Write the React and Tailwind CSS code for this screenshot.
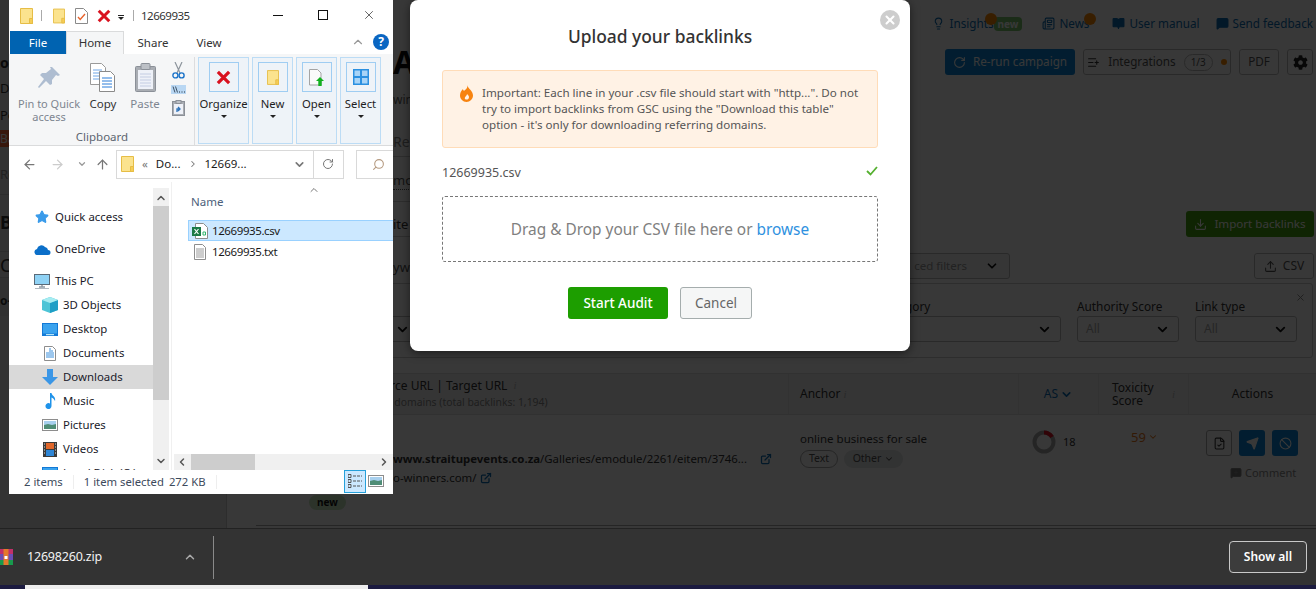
import { Star, ChevronDown, ChevronUp, ChevronRight, ChevronLeft, ArrowLeft, ArrowRight, ArrowUp, RotateCw, Search, X, Lightbulb, Newspaper, BookOpen, MessageSquare, ListPlus, Upload, Download, ExternalLink, FileCheck, Send, Ban, MessageSquarePlus } from "lucide-react";
import { FaCog } from "react-icons/fa";

const uiFont = "font-['Noto_Sans','Open_Sans',sans-serif]";

function FolderIcon({ w = 13, h = 16 }) {
  return (
    <svg width={w} height={h} viewBox="0 0 13 16" className="shrink-0">
      <path d="M.5.5h12v15H.5z" fill="#fbe38e" stroke="#e6bd45" />
      <path d="M9.5 10.5h3v5h-3z" fill="#f6cd55" stroke="#e6bd45" />
    </svg>
  );
}

function RedX({ size = 16 }) {
  return (
    <svg width={size} height={size} viewBox="0 0 16 16" className="shrink-0">
      <path d="M2 2l12 12M14 2L2 14" stroke="#d9121f" strokeWidth="3.4" />
    </svg>
  );
}

function CheckDoc() {
  return (
    <svg width="13" height="16" viewBox="0 0 13 16" className="shrink-0">
      <path d="M.5.5h8l4 4v11H.5z" fill="#fff" stroke="#8a8a8a" />
      <path d="M3 9l2.2 2.4L10 6" fill="none" stroke="#e8622a" strokeWidth="1.4" />
    </svg>
  );
}

function PinIcon() {
  return (
    <svg width="24" height="24" viewBox="0 0 24 24">
      <path d="M15 1l8 8-2 1-2-1-4 5 0 4-2 1-4-4-7 7-1-1 6-8-4-4 2-2 4 0 5-4-1-2z" fill="#aebdd1" />
    </svg>
  );
}

function CopyIcon() {
  return (
    <svg width="26" height="29" viewBox="0 0 26 29">
      <path d="M.5.5h11l4 4v17H.5z" fill="#fff" stroke="#9a9a9a" />
      <path d="M3 7h9M3 10h9M3 13h9M3 16h9" stroke="#6ea6e6" />
      <path d="M9.5 8.5h11l4 4v16h-15z" fill="#fff" stroke="#8a8a8a" />
      <path d="M12 15h10M12 18h10M12 21h10M12 24h10" stroke="#2b7cd8" />
    </svg>
  );
}

function PasteIcon() {
  return (
    <svg width="21" height="29" viewBox="0 0 21 29">
      <rect x=".5" y="3.5" width="20" height="25" rx="1" fill="#a9adb3" stroke="#8b9098" />
      <rect x="3" y="7" width="15" height="19" fill="#eef1f8" />
      <path d="M5 11h11M5 14h11M5 17h11M5 20h11M5 23h11" stroke="#c3cce2" />
      <rect x="6" y="0.5" width="9" height="6" rx="1" fill="#bcc0c6" stroke="#8b9098" />
    </svg>
  );
}

function ScissorsIcon() {
  return (
    <svg width="13" height="17" viewBox="0 0 13 17">
      <path d="M3 0l5 11M10 0L5 11" stroke="#8d949c" strokeWidth="1.2" fill="none" />
      <circle cx="3.4" cy="13.4" r="2.5" fill="none" stroke="#1d74c9" strokeWidth="1.4" />
      <circle cx="9.6" cy="13.4" r="2.5" fill="none" stroke="#1d74c9" strokeWidth="1.4" />
    </svg>
  );
}

function PathIcon() {
  return (
    <svg width="15" height="9" viewBox="0 0 15 9">
      <rect width="15" height="9" fill="#b9d7f3" />
      <path d="M2 1.5l2 6M4.500 1.500l2 6" stroke="#20303f" strokeWidth=".8" />
      <path d="M8 7h1M10.500 7h1M13 7h1" stroke="#20303f" />
    </svg>
  );
}

function ShortcutIcon() {
  return (
    <svg width="13" height="16" viewBox="0 0 13 16">
      <rect x=".5" y="1.500" width="12" height="14" fill="#a9adb3" stroke="#8b9098" />
      <rect x="2" y="4" width="9" height="10" fill="#eef1f8" />
      <rect x="4" y=".5" width="5" height="3" fill="#bcc0c6" stroke="#8b9098" />
      <path d="M5 12V9h3M6 7l2 2-2 2" fill="none" stroke="#2d72b8" strokeWidth="1.300" />
    </svg>
  );
}

function OpenIcon() {
  return (
    <svg width="15" height="17" viewBox="0 0 15 17">
      <path d="M.5.500h8l3.500 3.500v12H.5z" fill="#fafafa" stroke="#a4a4a4" />
      <path d="M11 8l4 4h-2.300v5h-3.400v-5H7z" fill="#12b01e" />
    </svg>
  );
}

function SelectIcon() {
  return (
    <svg width="16" height="16" viewBox="0 0 16 16">
      <path d="M0 0h16v16H0z" fill="#2b90e0" />
      <path d="M1.500 1.500h5.500v5.500H1.500zM9 1.500h5.500v5.500H9zM1.500 9h5.500v5.500H1.500zM9 9h5.500v5.500H9z" fill="#a8d4f7" />
    </svg>
  );
}

const ribbonGroups = [
  { label: "Organize", width: "w-[51px]", icon: <RedX size={15} /> },
  { label: "New", width: "w-[41px]", icon: <FolderIcon w={12} h={15} /> },
  { label: "Open", width: "w-[41px]", icon: <OpenIcon /> },
  { label: "Select", width: "w-[41px]", icon: <SelectIcon /> },
];

function RibbonGroup({ label, width, icon }) {
  return (
    <div className={`${width} h-[87px] flex flex-col items-center bg-[#eef3f8] border border-[#bcdcf5]`}>
      <div className="mt-[4px] w-[30px] h-[30px] flex items-center justify-center border border-[#9fcdf2]">{icon}</div>
      <span className="mt-[4px] text-[11.3px] leading-[16px] text-[#1e1e1e]">{label}</span>
      <span className="mt-[3px] w-0 h-0 border-x-[3px] border-x-transparent border-t-[3px] border-t-[#222]" />
    </div>
  );
}

function Ribbon() {
  return (
    <div className="h-[92px] flex bg-[#f5f6f7] border-b border-[#dadbdc] pt-[3px]">
      <div className="w-[186px] shrink-0 relative flex flex-col border-r border-[#dcdddf]">
        <div className="flex h-[72px]">
          <div className="w-[78px] pl-[2px] flex flex-col items-center pt-[9px]">
            <PinIcon />
            <span className="mt-[7px] text-[11px] leading-[13px] text-[#7d8590] text-center whitespace-nowrap">
              Pin to Quick
              <br />
              access
            </span>
          </div>
          <div className="w-[32px] flex flex-col items-center pt-[6px]">
            <CopyIcon />
            <span className="mt-[5px] text-[11.5px] leading-[13px] text-[#333]">Copy</span>
          </div>
          <div className="w-[52px] flex flex-col items-center pt-[6px]">
            <PasteIcon />
            <span className="mt-[5px] text-[11.5px] leading-[13px] text-[#7d8590]">Paste</span>
          </div>
          <div className="flex flex-col items-center pt-[5px] gap-[6px]">
            <ScissorsIcon />
            <PathIcon />
            <ShortcutIcon />
          </div>
        </div>
        <span className="w-[186px] text-center text-[11.5px] leading-[14px] text-[#5c6570] mt-[1px]">Clipboard</span>
      </div>
      <div className="flex gap-[3px] ml-[3px]">
        {ribbonGroups.map((g) => (
          <RibbonGroup key={g.label} {...g} />
        ))}
      </div>
    </div>
  );
}

function StarIcon() {
  return <Star size={14} fill="#3a9bea" stroke="#3a9bea" />;
}

function CloudIcon() {
  return (
    <svg width="17" height="11" viewBox="0 0 17 11">
      <path d="M4 11a3 3 0 0 1-1-6 4.500 4.500 0 0 1 8-2 3.500 3.500 0 0 1 3 3 2.500 2.500 0 0 1 0 5z" fill="#0b6fc9" />
    </svg>
  );
}

function PcIcon() {
  return (
    <svg width="16" height="15" viewBox="0 0 16 15">
      <rect x=".5" y=".5" width="15" height="10" fill="#8fd2f5" stroke="#5a6a78" />
      <path d="M5 13h6M8 11v2" stroke="#8f9aa5" strokeWidth="1.500" />
      <path d="M1 14.500h14" stroke="#b0b8c0" />
    </svg>
  );
}

function CubeIcon() {
  return (
    <svg width="16" height="16" viewBox="0 0 16 16">
      <path d="M8 0l8 3v10l-8 3-8-3V3z" fill="#4cc4d6" />
      <path d="M8 6l8-3v10l-8 3z" fill="#1e9ec6" />
      <path d="M8 0l8 3-8 3-8-3z" fill="#a6ecf1" />
    </svg>
  );
}

function DesktopIcon() {
  return (
    <svg width="16" height="13" viewBox="0 0 16 13">
      <rect width="16" height="13" fill="#1279d6" />
      <rect x="1" y="1" width="14" height="9.500" fill="#3aa3ee" />
      <path d="M4 11.700h8" stroke="#dff" />
    </svg>
  );
}

function DocIcon() {
  return (
    <svg width="12" height="15" viewBox="0 0 12 15">
      <path d="M.5.5h8l3 3v11H.5z" fill="#fff" stroke="#8d8d8d" />
      <path d="M5 3h2M5 5h4M2 7h8M2 9h8M2 11h8" stroke="#3b8fdc" />
    </svg>
  );
}

function DownloadsIcon() {
  return (
    <svg width="16" height="16" viewBox="0 0 16 16">
      <path d="M5 0h6v8h5l-8 8-8-8h5z" fill="#3a96e6" />
    </svg>
  );
}

function MusicIcon() {
  return (
    <svg width="11" height="16" viewBox="0 0 11 16">
      <path d="M5 0h1.500c.5 3 4.500 3.500 3.500 8-1-2-2-3-3.500-3.500V13a3 3 0 1 1-1.500-2.500z" fill="#1f93ea" />
    </svg>
  );
}

function PictureIcon() {
  return (
    <svg width="16" height="12" viewBox="0 0 16 12">
      <rect x=".5" y=".5" width="15" height="11" fill="#fff" stroke="#8d8d8d" />
      <rect x="2" y="2" width="12" height="4" fill="#a8d0ee" />
      <path d="M2 6l4-1 4 1 4-1v5H2z" fill="#4f8d76" />
    </svg>
  );
}

function VideoIcon() {
  return (
    <svg width="14" height="15" viewBox="0 0 14 15">
      <rect width="14" height="15" fill="#3a3a3a" />
      <rect x="3" y="1" width="8" height="6" fill="#e0672b" />
      <rect x="3" y="8" width="8" height="6" fill="#2e86d6" />
      <path d="M1 2h1M1 5h1M1 8h1M1 11h1M12 2h1M12 5h1M12 8h1M12 11h1" stroke="#ddd" />
    </svg>
  );
}

const navItems = [
  { label: "Quick access", icon: <StarIcon />, row: "h-[32px] pl-[24px]" },
  { label: "OneDrive", icon: <CloudIcon />, row: "h-[32px] pl-[24px]" },
  { label: "This PC", icon: <PcIcon />, row: "h-[28px] pt-[4px] pl-[24px]" },
  { label: "3D Objects", icon: <CubeIcon />, row: "h-[24px] pl-[32px]" },
  { label: "Desktop", icon: <DesktopIcon />, row: "h-[24px] pl-[32px]" },
  { label: "Documents", icon: <DocIcon />, row: "h-[24px] pl-[32px]" },
  { label: "Downloads", icon: <DownloadsIcon />, row: "h-[24px] pl-[32px]", active: true },
  { label: "Music", icon: <MusicIcon />, row: "h-[24px] pl-[32px]" },
  { label: "Pictures", icon: <PictureIcon />, row: "h-[24px] pl-[32px]" },
  { label: "Videos", icon: <VideoIcon />, row: "h-[24px] pl-[32px]" },
  { label: "Local Disk (C:)", icon: <DesktopIcon />, row: "h-[24px] pl-[32px]" },
];

function NavPane() {
  return (
    <div className="w-[144px] shrink-0 pt-[19px] overflow-hidden">
      {navItems.map((item) => (
        <div key={item.label} className={`${item.row} flex items-center ${item.active ? "bg-[#d9d9d9]" : ""}`}>
          <span className="w-[18px] mr-[4px] shrink-0 flex justify-center">{item.icon}</span>
          <span className="text-[11.4px] text-[#1a1a2a] whitespace-nowrap">{item.label}</span>
        </div>
      ))}
    </div>
  );
}

function ExcelIcon() {
  return (
    <svg width="16" height="16" viewBox="0 0 16 16" className="shrink-0">
      <path d="M3.500.5h8l4 4v11h-12z" fill="#fff" stroke="#8d8d8d" />
      <rect x="0" y="4" width="9" height="9" fill="#1b7a45" />
      <path d="M2.500 6l4 5M6.500 6l-4 5" stroke="#fff" strokeWidth="1.200" />
      <path d="M11 9h2.500v3H11z" fill="none" stroke="#33b56e" />
    </svg>
  );
}

function TextFileIcon() {
  return (
    <svg width="12" height="16" viewBox="0 0 12 16" className="shrink-0">
      <path d="M.5.5h8l3 3v12H.5z" fill="#fff" stroke="#8d8d8d" />
      <path d="M2 5h8M2 7h8M2 9h8M2 11h8M2 13h8" stroke="#9a9a9a" />
    </svg>
  );
}

function FilePane() {
  return (
    <div className="flex-1 min-w-0 flex flex-col relative border-l border-[#f0f0f0] ml-[2px]">
      <ChevronUp size={12} className="absolute left-[136px] top-[2px] text-[#777]" />
      <div className="h-[38px] pl-[19px] flex items-end pb-[10px] text-[11.5px] text-[#4c607a] shrink-0">Name</div>
      <div className="ml-[16px] h-[21px] flex items-center pl-[3px] gap-[4px] bg-[#cce8ff] border border-[#99d1ff] border-r-0 text-[11.5px] tracking-[-0.4px] text-[#1a1a1a]">
        <ExcelIcon />
        12669935.csv
      </div>
      <div className="ml-[16px] h-[21px] flex items-center pl-[6px] gap-[6px] text-[11.5px] tracking-[-0.4px] text-[#1a1a1a]">
        <TextFileIcon />
        12669935.txt
      </div>
      <div className="mt-auto ml-[2px] h-[16px] flex items-center bg-[#f0f0f0]">
        <ChevronLeft size={12} strokeWidth={3} className="ml-[2px] text-[#555]" />
        <div className="ml-[3px] w-[64px] h-full bg-[#cdcdcd]" />
        <ChevronRight size={12} strokeWidth={3} className="ml-auto mr-[3px] text-[#555]" />
      </div>
    </div>
  );
}

function ExplorerWindow() {
  return (
    <div className={`absolute left-[9px] top-0 w-[384px] h-[494px] flex flex-col bg-white ${uiFont}`}>
      <div className="h-[31px] shrink-0 flex items-center relative">
        <span className="ml-[11px]"><FolderIcon /></span>
        <span className="ml-[8px] w-px h-[11px] bg-[#aaa]" />
        <span className="ml-[11px]"><FolderIcon w={12} h={16} /></span>
        <span className="ml-[10px]"><CheckDoc /></span>
        <span className="ml-[9px]"><RedX size={14} /></span>
        <span className="ml-[7px] flex flex-col items-center gap-[1px] mt-[3px]">
          <span className="w-[6px] h-px bg-[#222]" />
          <span className="w-0 h-0 border-x-[3px] border-x-transparent border-t-[3px] border-t-[#222]" />
        </span>
        <span className="ml-[9px] w-px h-[11px] bg-[#aaa]" />
        <span className="ml-[7px] text-[11.5px] tracking-[-0.5px] text-[#333]">12669935</span>
        <span className="absolute left-[264px] top-[15px] w-[10px] h-px bg-[#111]" />
        <span className="absolute left-[309px] top-[10px] w-[10px] h-[10px] border border-[#111]" />
        <X size={14} strokeWidth={1.1} className="absolute left-[353px] top-[8px] text-[#111]" />
      </div>

      <div className="h-[23px] shrink-0 flex items-end relative text-[11.5px] pl-[1px]">
        <div className="w-[56px] h-[23px] flex items-center justify-center bg-[#0063b1] text-white">File</div>
        <div className="w-[58px] h-[23px] flex items-center justify-center bg-[#f5f6f7] border border-b-0 border-[#dadbdc] text-[#333]">Home</div>
        <div className="w-[58px] h-[23px] flex items-center justify-center text-[#333]">Share</div>
        <div className="w-[54px] h-[23px] flex items-center justify-center text-[#333]">View</div>
        <ChevronUp size={14} className="absolute left-[342px] top-[4px] text-[#999]" />
        <span className="absolute left-[364px] top-[3px] w-[16px] h-[16px] rounded-full bg-[#0a66c2] text-white text-[12px] font-bold leading-[16px] text-center">?</span>
      </div>

      <Ribbon />

      <div className="h-[36px] shrink-0 flex items-center relative">
        <ArrowLeft size={15} className="ml-[13px] text-[#777]" />
        <ArrowRight size={15} className="ml-[13px] text-[#ccc]" />
        <ChevronDown size={10} strokeWidth={3} className="ml-[12px] text-[#999]" />
        <ArrowUp size={15} className="ml-[8px] text-[#777]" />
        <div className="ml-[6px] w-[228px] h-[29px] flex items-center border border-[#d9d9d9] text-[11.5px] text-[#1a1a1a]">
          <span className="ml-[4px]"><FolderIcon /></span>
          <span className="ml-[8px] text-[#777]">«</span>
          <span className="ml-[8px]">Do...</span>
          <ChevronRight size={10} strokeWidth={2.5} className="ml-[8px] text-[#777]" />
          <span className="ml-[6px]">12669...</span>
          <ChevronDown size={13} strokeWidth={3} className="ml-[46px] text-[#777]" />
          <span className="ml-[7px] h-full w-[30px] border-l border-[#d9d9d9] flex items-center justify-center">
            <RotateCw size={12} className="text-[#777]" />
          </span>
        </div>
        <div className="ml-[12px] flex-1 h-[29px] border border-r-0 border-[#d9d9d9] flex items-center pl-[15px]">
          <Search size={13} className="-scale-x-100 text-[#b59a80]" />
        </div>
      </div>

      <div className="flex-1 min-h-0 flex">
        <NavPane />
        <div className="w-[16px] shrink-0 flex flex-col items-center bg-[#f0f0f0] mt-[6px]">
          <ChevronUp size={12} strokeWidth={3} className="mt-[4px] text-[#555]" />
          <div className="mt-[2px] w-full h-[194px] bg-[#cdcdcd]" />
          <ChevronDown size={12} strokeWidth={3} className="mt-auto mb-[3px] text-[#555]" />
        </div>
        <FilePane />
      </div>

      <div className="h-[24px] shrink-0 flex items-center text-[11.3px] text-[#3d4a5c] relative">
        <span className="ml-[15px]">2 items</span>
        <span className="ml-[10px] w-px h-[14px] bg-[#eee]" />
        <span className="ml-[10px]">1 item selected</span>
        <span className="ml-[5px]">272 KB</span>
        <span className="ml-[10px] w-px h-[14px] bg-[#eee]" />
        <div className="ml-auto mr-[27px] w-[22px] h-[23px] -mt-[2px] bg-[#cce8ff] border border-[#26a0da] flex items-center justify-center">
          <svg width="14" height="14" viewBox="0 0 14 14">
            <path d="M0 .5h3v3H0zM0 5.500h3v3H0zM0 10.500h3v3H0z" fill="none" stroke="#555" />
            <path d="M5 2h9M5 7h9M5 12h9" stroke="#555" strokeDasharray="3 1" />
          </svg>
        </div>
        <span className="absolute right-[9px] top-[5px]"><PictureIcon /></span>
      </div>
    </div>
  );
}

function FlameIcon() {
  return (
    <svg width="13" height="17" viewBox="0 0 13 17" className="shrink-0">
      <path d="M7 0c1 3-1 4-3 6C3 5 3 4 3 4 1 6 0 8 0 10.500 0 14 3 17 6.500 17S13 14 13 10.500C13 6 8.500 4 7 0z" fill="#f7830f" />
      <path d="M7 9c0 2-3 3-2 5 1 1 4 1 4-2 0-1-1-2-2-3z" fill="#fff2e5" />
    </svg>
  );
}

function UploadModal() {
  return (
    <div className={`absolute left-[410px] top-0 w-[500px] h-[351px] rounded-[8px] bg-white px-[32px] pt-[24px] flex flex-col shadow-[0_2px_10px_rgba(0,0,0,0.5)] ${uiFont}`}>
      <span className="absolute right-[10px] top-[10px] w-[20px] h-[20px] rounded-full bg-[#cdcdcd] flex items-center justify-center">
        <X size={14} strokeWidth={3.5} className="text-white" />
      </span>
      <h2 className="text-center text-[17.4px] leading-[24px] font-medium text-[#333]">Upload your backlinks</h2>
      <div className="mt-[22px] h-[78px] flex gap-[9px] pl-[17px] pt-[14px] bg-[#fff2e5] border border-[#ffdcb8] rounded-[3px]">
        <FlameIcon />
        <p className="text-[11.6px] leading-[16px] text-[#555] whitespace-nowrap">
          Important: Each line in your .csv file should start with "http...". Do not
          <br />
          try to import backlinks from GSC using the "Download this table"
          <br />
          option - it's only for downloading referring domains.
        </p>
      </div>
      <div className="mt-[15px] h-[20px] flex items-center justify-between text-[12.5px] text-[#555]">
        12669935.csv
        <svg width="12" height="10" viewBox="0 0 12 10" className="-mt-[5px]">
          <path d="M1 5l3.500 3.500L11 1" fill="none" stroke="#55b030" strokeWidth="1.800" />
        </svg>
      </div>
      <div className="mt-[13px] h-[66px] pt-[2px] flex items-center justify-center border border-dashed border-[#777] rounded-[3px] text-[15.4px] text-[#808080]">
        <span>
          Drag &amp; Drop your CSV file here or <span className="text-[#2e91e0]">browse</span>
        </span>
      </div>
      <div className="mt-[25px] flex justify-center gap-[12px]">
        <button className="w-[100px] h-[32px] rounded-[3px] bg-[#1d9e00] text-white text-[13.5px] font-medium">Start Audit</button>
        <button className="w-[72px] h-[32px] rounded-[3px] bg-[#f5f6f6] border border-[#a5adad] text-[#666] text-[13.5px]">Cancel</button>
      </div>
    </div>
  );
}

function PageFilter({ label, width, value }) {
  return (
    <div className={width}>
      <div className="text-[11.8px] leading-[16px] text-[#333] h-[18px] whitespace-nowrap">{label}</div>
      <div className="h-[26px] flex items-center justify-between px-[8px] border border-[#bbb] rounded-[3px] text-[12px] text-[#aaa]">
        {value}
        <ChevronDown size={15} strokeWidth={3} className="text-[#111] ml-auto" />
      </div>
    </div>
  );
}

function TopLink({ icon, children, className = "" }) {
  return (
    <span className={`flex items-center gap-[4px] text-[11.7px] text-[#0a6cb4] whitespace-nowrap ${className}`}>
      {icon}
      {children}
    </span>
  );
}

function HintI() {
  return <i className="font-['Liberation_Serif',serif] text-[11px] text-[#bbb]">i</i>;
}

function BackgroundPage() {
  return (
    <div className={`relative flex-1 min-h-0 flex bg-white overflow-hidden ${uiFont}`}>
      <aside className="w-[227px] shrink-0 border-r border-[#ccc] bg-[#e8e8e8] text-[#333]">
        <div className="h-[52px]" />
        <div className="h-[27px] text-[14px] font-bold">o-</div>
        <div className="h-[27px] text-[13px]">Da</div>
        <div className="h-[24px] text-[13px]">Po</div>
        <div className="h-[17px] bg-[#ff6a3a] text-white text-[12px]">Ba</div>
        <div className="h-[48px] pt-[18px] text-[13px] text-[#999] border-b border-[#ccc]">Re</div>
        <div className="h-[57px] pt-[14px] text-[18px] font-bold border-b border-[#ccc]">B</div>
        <div className="h-[26px] text-[18px] border-b border-[#ccc]">C</div>
        <div className="h-[38px] pt-[14px] bg-[#ddd] font-bold text-[12px]">o-</div>
      </aside>

      <main className="flex-1 min-w-0 flex flex-col pl-[29px]">
        <div className="h-[49px] shrink-0 flex items-center pr-[3px] pb-[1px]">
          <ChevronRight size={11} className="ml-[108px] text-[#555]" />
          <div className="ml-auto flex items-center">
            <span className="relative flex items-center">
              <TopLink icon={<Lightbulb size={13} />} className="gap-[5px]">Insights</TopLink>
              <span className="absolute left-[53px] -top-[2px] w-[12px] h-[12px] rounded-full bg-[#ff8a00]" />
              <span className="h-[14px] px-[4px] rounded-[4px] bg-[#7bc96f] text-white text-[10px] leading-[14px] font-bold">new</span>
            </span>
            <span className="relative ml-[20px]">
              <TopLink icon={<Newspaper size={13} />}>News</TopLink>
              <span className="absolute left-[42px] -top-[2px] w-[12px] h-[12px] rounded-full bg-[#ff8a00]" />
            </span>
            <TopLink className="ml-[23px]" icon={<BookOpen size={13} fill="currentColor" />}>User manual</TopLink>
            <TopLink className="ml-[16px]" icon={<MessageSquare size={13} fill="currentColor" />}>Send feedback</TopLink>
          </div>
        </div>

        <div className="h-[26px] shrink-0 flex items-center pr-[3px]">
          <span className="ml-[137px] text-[32px] font-bold text-[#111] leading-[26px]">Audit</span>
          <div className="ml-auto flex items-center gap-[8px] text-[11.7px]">
            <span className="w-[130px] h-[26px] rounded-[3px] bg-[#0b86d8] text-white flex items-center justify-center gap-[7px]">
              <RotateCw size={13} />
              Re-run campaign
            </span>
            <span className="w-[148px] h-[26px] rounded-[3px] border border-[#bbb] text-[#555] flex items-center justify-center gap-[8px]">
              <ListPlus size={13} className="text-[#333]" />
              Integrations
              <span className="px-[6px] rounded-full border border-[#bbb] text-[10px]">1/3</span>
              <span className="w-[6px] h-[6px] rounded-full bg-[#ff8a00]" />
            </span>
            <span className="w-[40px] h-[26px] rounded-[3px] border border-[#bbb] text-[#555] flex items-center justify-center">PDF</span>
            <span className="w-[26px] h-[26px] rounded-[3px] border border-[#bbb] flex items-center justify-center">
              <FaCog size={15} className="text-[#222]" />
            </span>
          </div>
        </div>

        <div className="w-[180px] h-[82px] shrink-0 pl-[137px] border-b border-[#ccc] overflow-hidden whitespace-nowrap">
          <div className="mt-[16px] text-[12px] text-[#666]">wing</div>
          <div className="mt-[22px] text-[14px] text-[#888]">Re</div>
        </div>
        <div className="w-[180px] h-[45px] shrink-0 pl-[137px] pt-[14px] border-b border-[#ccc] text-[13px] text-[#555] overflow-hidden">
          <span className="border-b border-dotted border-[#555]">mo</span>
        </div>
        <div className="h-[35px] shrink-0 flex justify-between items-start pr-[2px]">
          <div className="w-[180px] h-[35px] pl-[137px] pt-[13px] border-b border-[#ccc] text-[13px] text-[#333]">ite</div>
          <span className="mt-[9px] w-[128px] h-[26px] rounded-[3px] bg-[#46a20e] text-white text-[11.6px] flex items-center justify-center gap-[7px]">
            <Download size={13} />
            Import backlinks
          </span>
        </div>
        <div className="h-[46px] shrink-0 flex items-start pr-[2px]">
          <span className="ml-[137px] mt-[21px] text-[13px] text-[#555]">ywh</span>
          <span className="ml-auto mt-[16px] w-[105px] h-[26px] border border-[#bbb] rounded-[3px] bg-[#f5f6f6] text-[11.5px] text-[#999] flex items-center justify-end gap-[18px] pr-[10px]">
            ced filters
            <ChevronDown size={14} strokeWidth={3} className="text-[#111]" />
          </span>
          <span className="ml-[244px] mt-[16px] w-[60px] h-[26px] border border-[#bbb] rounded-[3px] text-[12px] text-[#555] flex items-center justify-center gap-[6px]">
            <Upload size={13} />
            CSV
          </span>
        </div>

        <div className="relative h-[75px] shrink-0 mr-[3px] border border-[#ccc] rounded-[3px] pl-[4px] pr-[15px] flex items-end pb-[15px] justify-between">
          <X size={11} className="absolute right-[6px] top-[8px] text-[#888]" />
          <PageFilter label="Anywhere" width="w-[158px]" value="" />
          <div className="flex gap-4">
            <PageFilter label="Category" width="w-[181px]" value="" />
            <PageFilter label="Authority Score" width="w-[102px]" value="All" />
            <PageFilter label="Link type" width="w-[102px]" value="All" />
          </div>
        </div>

        <div className="mt-[15px] h-[42px] shrink-0 flex bg-[#f2f2f2] border-y border-[#ddd] text-[12px] text-[#333]">
          <div className="w-[533px] shrink-0 pl-[113px] flex flex-col justify-center leading-[17px] border-r border-[#e5e5e5]">
            <span className="flex items-center gap-[6px]">Source URL | Target URL <HintI /></span>
            <span className="-ml-[4px] text-[#888] text-[10.4px]">1,018 domains (total backlinks: 1,194)</span>
          </div>
          <div className="w-[230px] shrink-0 pl-[11px] flex items-center gap-[3px] border-r border-[#e5e5e5]">Anchor <HintI /></div>
          <div className="w-[80px] shrink-0 flex items-center justify-center gap-[2px] text-[#0a6cb4] border-r border-[#e5e5e5]">AS <ChevronDown size={13} strokeWidth={3} /></div>
          <div className="w-[90px] shrink-0 pl-[13px] flex items-center justify-between pr-[13px] border-r border-[#e5e5e5]">
            <span className="leading-[13px]">Toxicity<br />Score</span>
            <HintI />
          </div>
          <div className="flex-1 flex items-center justify-center">Actions</div>
        </div>

        <div className="flex text-[11.5px] text-[#333]">
          <div className="w-[533px] shrink-0 pl-[137px] pt-[34px] leading-[19px] whitespace-nowrap">
            <div className="flex items-center text-[11.4px]">
              <span><b>www.straitupevents.co.za</b>/Galleries/emodule/2261/eitem/3746...</span>
              <ExternalLink size={12} strokeWidth={2.5} className="ml-[13px] text-[#0a6cb4]" />
            </div>
            <div className="flex items-center text-[11.4px]">
              o-winners.com/
              <ExternalLink size={12} strokeWidth={2.5} className="ml-[4px] text-[#0a6cb4]" />
            </div>
          </div>
          <div className="w-[230px] shrink-0 pl-[11px] pt-[15px]">
            <div className="leading-[18px]">online business for sale</div>
            <div className="mt-[2px] flex gap-[6px] text-[10.5px]">
              <span className="h-[18px] w-[38px] flex items-center justify-center rounded-full border border-[#aaa] text-[#555]">Text</span>
              <span className="h-[18px] w-[59px] flex items-center justify-center gap-[3px] rounded-full bg-[#e4e6e6] text-[#555]">Other <ChevronDown size={10} strokeWidth={2.5} /></span>
            </div>
          </div>
          <div className="w-[80px] shrink-0 pl-[13px] pt-[15px] flex items-start gap-[7px]">
            <svg width="24" height="24" viewBox="0 0 24 24" className="shrink-0">
              <circle cx="12" cy="12" r="9.500" fill="none" stroke="#aaa" strokeWidth="4" />
              <path d="M12 2.500A9.500 9.500 0 0 1 20 7" fill="none" stroke="#d12" strokeWidth="4" />
            </svg>
            <span className="mt-[4px] text-[11px]">18</span>
          </div>
          <div className="w-[90px] shrink-0 pl-[32px] pt-[13px] flex items-start text-[13px] text-[#e8761a]">
            59
            <ChevronDown size={10} strokeWidth={2.5} className="mt-[4px] ml-[2px]" />
          </div>
          <div className="flex-1 pl-[17px] pt-[15px]">
            <div className="flex gap-[7px]">
              <span className="w-[26px] h-[26px] rounded-[3px] border border-[#aaa] flex items-center justify-center"><FileCheck size={13} /></span>
              <span className="w-[26px] h-[26px] rounded-[3px] bg-[#0b86d8] flex items-center justify-center text-white"><Send size={13} fill="currentColor" /></span>
              <span className="w-[26px] h-[26px] rounded-[3px] bg-[#0b86d8] flex items-center justify-center text-white"><Ban size={13} /></span>
            </div>
            <div className="mt-[9px] ml-[24px] flex items-center gap-[3px] text-[#888] text-[11px]">
              <MessageSquarePlus size={12} fill="#777" />
              Comment
            </div>
          </div>
        </div>
      </main>

      <div className="absolute left-[309px] top-[495px] h-[15px] w-[37px] rounded-full bg-[#c8e6c0] text-[10px] leading-[15px] text-center font-bold text-[#111]">new</div>
      <div className="absolute left-[256px] right-0 top-[525px] h-px bg-[#aaa]" />
      <div className="absolute inset-0 bg-black/78" />
    </div>
  );
}

function DownloadBar() {
  return (
    <div className="h-[57px] shrink-0 flex items-center bg-[#333] border-t border-[#222] font-['Noto_Sans','Open_Sans',sans-serif] text-[#f2f2f2]">
      <svg width="13" height="16" viewBox="0 0 13 16" className="shrink-0">
        <rect y="0" width="13" height="5" fill="#c2306a" />
        <rect y="5" width="13" height="6" fill="#6a4db5" />
        <rect y="11" width="13" height="5" fill="#189a4d" />
        <rect x="3.500" y="0" width="5" height="16" fill="#e4792b" />
        <rect x="4.500" y="7" width="3" height="3" fill="#fff" />
      </svg>
      <span className="ml-[14px] w-[82px] text-[12.5px] tracking-[-0.2px]">12698260.zip</span>
      <ChevronUp size={14} strokeWidth={2.5} className="ml-[74px] text-[#aaa]" />
      <span className="ml-[16px] w-px h-[43px] bg-[#8a8a8a]" />
      <button className="ml-auto mr-[9px] w-[78px] h-[32px] rounded-[4px] border border-[#c8c8c8] bg-[#3c3c3c] text-[12px] font-semibold text-white">Show all</button>
    </div>
  );
}

export default function App() {
  return (
    <div className="relative w-[1316px] h-[589px] overflow-hidden">
      <div className="h-full flex flex-col">
        <BackgroundPage />
        <DownloadBar />
        <div className="h-[4px] shrink-0 flex bg-[#1c1b40]">
          <span className="ml-[25px] w-[343px] bg-[#eeeeee]" />
        </div>
      </div>
      <ExplorerWindow />
      <UploadModal />
    </div>
  );
}
